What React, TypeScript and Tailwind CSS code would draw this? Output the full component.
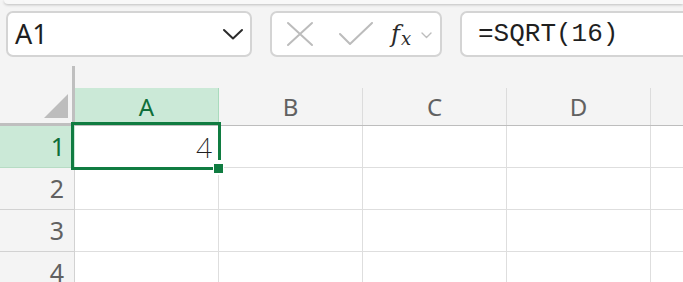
import React from "react";

const cols = ["A", "B", "C", "D", "E"];
const rows = [1, 2, 3, 4];

export default function App() {
  return (
    <div
      className="w-[683px] h-[282px] overflow-hidden bg-[#f4f4f4] flex flex-col"
      style={{ fontFamily: '"Noto Sans", "Open Sans", Arial, sans-serif' }}
    >
      {/* ribbon bottom edge */}
      <div className="h-[4px] ml-[4px] bg-[#f8f8f8] rounded-bl-[8px] shadow-[0_1px_3px_rgba(0,0,0,0.22)] shrink-0" />

      {/* formula bar */}
      <div className="flex items-center mt-[7px] h-[46px] shrink-0">
        <div className="ml-[6px] w-[246px] h-[46px] bg-white border-2 border-[#d4d4d4] rounded-[7px] flex items-center justify-between pl-[7px] pr-[4px]">
          <span className="text-[27px] leading-none text-[#1f1f1f] mt-[-1px]">A1</span>
          <svg width="22" height="14" viewBox="0 0 22 14" className="mr-[2px]">
            <path d="M2 3 L11 11.5 L20 3" fill="none" stroke="#2b2b2b" strokeWidth="2" strokeLinecap="round" strokeLinejoin="round" />
          </svg>
        </div>
        <div className="ml-[18px] w-[172px] h-[46px] bg-white border-2 border-[#d4d4d4] rounded-[7px] flex items-center pl-[14px]">
          <svg width="28" height="26" viewBox="0 0 28 26">
            <path d="M2 2 L26 24 M26 2 L2 24" fill="none" stroke="#bcbcbc" strokeWidth="2" strokeLinecap="round" />
          </svg>
          <svg width="36" height="24" viewBox="0 0 36 24" className="ml-[24px]">
            <path d="M2 12 L12 22 L34 1" fill="none" stroke="#bcbcbc" strokeWidth="2" strokeLinecap="round" strokeLinejoin="round" />
          </svg>
          <span
            className="ml-[17px] text-[#2a2a2a] leading-none flex items-end"
            style={{ fontFamily: '"DejaVu Serif", "Liberation Serif", serif' }}
          >
            <span className="text-[24px] italic">f</span>
            <span className="text-[18px] italic ml-[1px] mb-[-2px]">x</span>
          </span>
          <svg width="11" height="7" viewBox="0 0 11 7" className="ml-[10px] mt-[2px]">
            <path d="M1 1 L5.5 5.5 L10 1" fill="none" stroke="#bdbdbd" strokeWidth="1.4" strokeLinecap="round" strokeLinejoin="round" />
          </svg>
        </div>
        <div className="ml-[18px] flex-1 h-[46px] bg-white border-2 border-r-0 border-[#d4d4d4] rounded-l-[7px] flex items-center pl-[16px]">
          <span
            className="text-[26px] leading-none text-[#1f1f1f]"
            style={{ fontFamily: '"Liberation Mono", "DejaVu Sans Mono", monospace' }}
          >
            =SQRT(16)
          </span>
        </div>
      </div>

      {/* grid */}
      <div className="relative mt-[9px] flex flex-1">
        {/* row header column */}
        <div className="w-[75px] shrink-0 flex flex-col">
          <div className="relative w-[75px] h-[60px] border-r-[3px] border-b-[3px] border-[#bfbfbf] bg-[#f4f4f4]">
            <svg width="24" height="24" viewBox="0 0 24 24" className="absolute right-[4px] bottom-[5px]">
              <path d="M24 0 L24 24 L0 24 Z" fill="#bdbdbd" />
            </svg>
          </div>
          {rows.map((r) => (
            <div
              key={r}
              className={
                r === 1
                  ? "h-[42px] shrink-0 bg-[#cbe9d7] border-b border-[#b7dcc4] flex items-center justify-end pr-[10px] text-[25px] leading-none text-[#0f6e39]"
                  : "h-[42px] shrink-0 bg-[#f4f4f4] border-r border-b border-[#d2d2d2] flex items-center justify-end pr-[10px] text-[25px] leading-none text-[#616161]"
              }
            >
              {r}
            </div>
          ))}
        </div>

        {/* columns */}
        <div className="flex-1 flex flex-col pt-[22px]">
          <div className="flex h-[38px] shrink-0 border-b border-[#bdbdbd]">
            {cols.map((c) => (
              <div
                key={c}
                className={
                  c === "A"
                    ? "w-[144px] shrink-0 bg-[#cbe9d7] border-r border-[#a9dbbd] flex items-center justify-center text-[24px] leading-none text-[#0f6e39]"
                    : "w-[144px] shrink-0 border-r border-[#dcdcdc] flex items-center justify-center text-[24px] leading-none text-[#616161]"
                }
              >
                {c}
              </div>
            ))}
          </div>
          {rows.map((r) => (
            <div key={r} className="flex h-[42px] shrink-0 bg-white border-b border-[#dedede]">
              {cols.map((c) => (
                <div
                  key={c}
                  className="w-[144px] shrink-0 border-r border-[#dedede] flex items-center justify-end pr-[6px]"
                >
                  {r === 1 && c === "A" ? (
                    <span className="text-[28px] font-extralight leading-none text-[#1f1f1f]">4</span>
                  ) : null}
                </div>
              ))}
            </div>
          ))}
        </div>

        {/* selection */}
        <div className="absolute left-[71px] top-[56px] w-[150px] h-[48px] border-[3px] border-[#107c41] pointer-events-none" />
        <div className="absolute left-[213px] top-[94px] w-[11px] h-[15px] bg-white pl-[1px] pt-[3px] pr-[1px]">
          <div className="w-[9px] h-[9px] bg-[#107c41] mt-[1px]" />
        </div>
      </div>
    </div>
  );
}
